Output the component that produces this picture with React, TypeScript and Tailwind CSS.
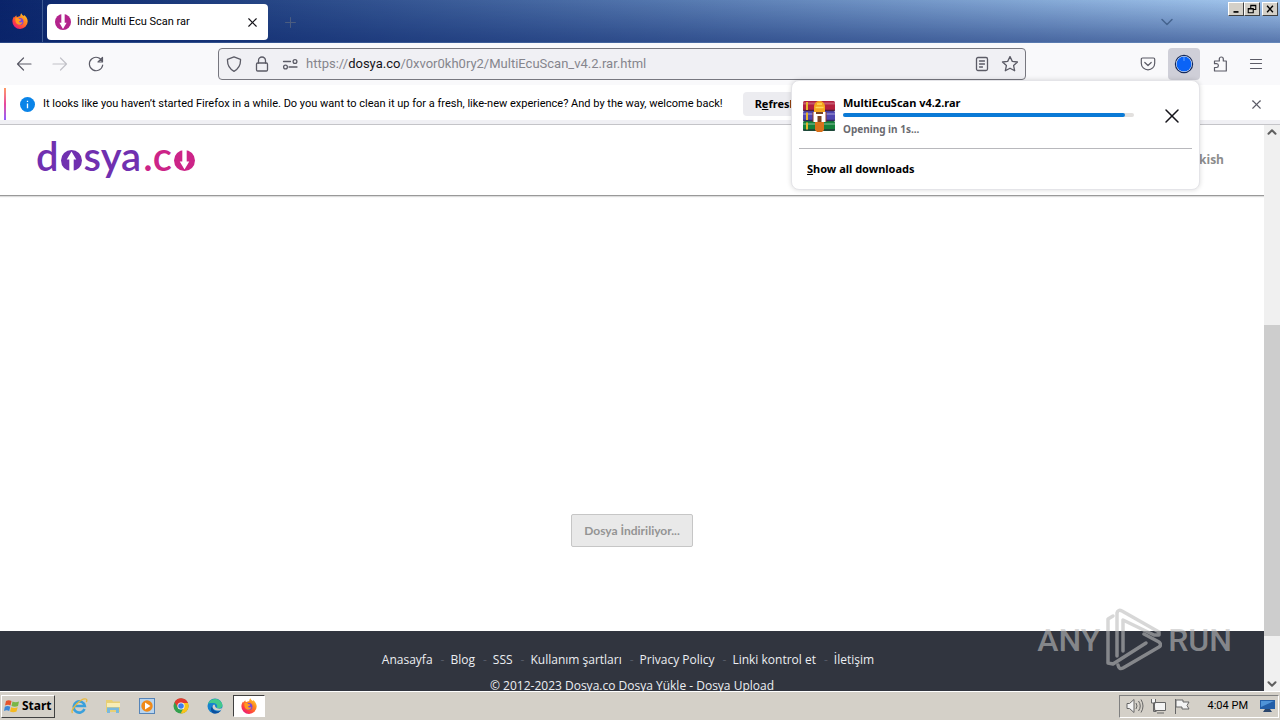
import { ReactNode } from "react";
import { ChevronDown, ChevronUp, Plus, X } from "lucide-react";

const ui = "font-['Noto_Sans','Open_Sans',sans-serif]";

const footerLinks = ["Anasayfa", "Blog", "SSS", "Kullanım şartları", "Privacy Policy", "Linki kontrol et", "İletişim"];

function Firefox({ className }: { className: string }) {
    return (
        <svg viewBox="0 0 16 16" className={className}>
            <defs>
                <linearGradient id="fx" x1="1" y1="0" x2="0.2" y2="1">
                    <stop offset="0" stopColor="#ffe03a" />
                    <stop offset="0.4" stopColor="#ff8a1c" />
                    <stop offset="0.75" stopColor="#ff4040" />
                    <stop offset="1" stopColor="#e31587" />
                </linearGradient>
            </defs>
            <path fill="url(#fx)" d="M9.4 0.2c.4 1.6 1.5 2 2.4 2.8.2-.4.3-.7.3-1 2 1.400 3.600 3.900 3.600 6.600A7.600 7.300 0 0 1 .4 8.500c0-2.200.7-3.900 1.700-5.100l.3 1.200C3 3.700 3.800 3 4.300 2.300c0 .8.2 1.400.7 2C6.500 3 8.200 3.200 8.200 3.200 8.300 1.700 8.700.8 9.400.2z" />
            <circle cx="7.900" cy="8.400" r="3.500" fill="#7543e3" />
            <path fill="#ff9a20" d="M3.400 5.200c1.500-.8 3-.4 4 .8 1 .2 1.700.3 1.900.9-.5 1-1.900.9-2.400 1.500.5 1.300 2.400 1.400 3.500.4-.2 2-1.800 3.100-3.500 2.900C4.300 11.400 3 8.500 3.400 5.200z" />
        </svg>
    );
}

function RoundLogo({ className, down, color }: { className: string; down?: boolean; color: string }) {
    return (
        <svg viewBox="0 0 22 22" className={className}>
            <g transform={down ? "rotate(180 11 11)" : undefined}>
                <circle cx="11" cy="11" r="11" fill={color} />
                <path fill="#fff" d="M11 1.500l5 8.500h-2.700v12H8.700V10H6z" />
            </g>
        </svg>
    );
}

function ToolButton({ label, children, active }: { label: string; children: ReactNode; active?: boolean }) {
    return (
        <button aria-label={label} className={`flex size-8 items-center justify-center rounded ${active ? "bg-[#cfcfd8]" : ""}`}>
            <svg viewBox="0 0 16 16" className="size-4 overflow-visible" fill="none" stroke="#5b5b66" strokeWidth="1.2" strokeLinecap="round" strokeLinejoin="round">
                {children}
            </svg>
        </button>
    );
}

function TitleBar() {
    return (
        <header className="bg-linear-to-r from-[#0a246a] to-[#a6caf0]">
            <div className="flex h-[43px] items-start border-b border-[#3c5c96]/60 bg-linear-to-b from-transparent to-[#0a246a]/50">
                <div className="flex h-full w-[43px] items-center border-r border-[#5470a4]/70 pl-3">
                    <Firefox className="size-4" />
                </div>
                <div className="ml-1 mt-1 flex h-9 w-[221px] items-center rounded bg-white pl-2 pr-2">
                    <RoundLogo className="size-4" down color="#b3238c" />
                    <span className="ml-1.5 flex-1 font-['Roboto',sans-serif] text-[11px] text-black">İndir Multi Ecu Scan rar</span>
                    <button aria-label="Close tab" className="flex size-4 items-center justify-center">
                        <X size={15} strokeWidth={1.800} color="#15141a" className="shrink-0" />
                    </button>
                </div>
                <button aria-label="New tab" className="ml-3.5 mt-3.5">
                    <Plus size={17} strokeWidth={1.4} color="#4c5d80" />
                </button>
                <button aria-label="List all tabs" className="ml-auto mt-3 mr-[51px]">
                    <ChevronDown size={20} strokeWidth={1.8} color="#46648f" />
                </button>
                <div className="mr-0.5 mt-0.5 flex">
                    <WindowButton label="Minimize"><path d="M3 9.500h6" strokeWidth="2" /></WindowButton>
                    <WindowButton label="Restore"><path d="M4.500 5V1.500h6v5H8M1.500 5.500h6v5h-6zM4 2h7M1 6h7" /></WindowButton>
                    <span className="w-0.5" />
                    <WindowButton label="Close"><path d="M2.500 2l7 8M9.500 2l-7 8" strokeWidth="1.700" /></WindowButton>
                </div>
            </div>
        </header>
    );
}

function WindowButton({ label, children }: { label: string; children: ReactNode }) {
    return (
        <button aria-label={label} className="flex h-3.5 w-4 items-center justify-center border border-t-white border-l-white border-r-[#404040] border-b-[#404040] bg-[#d4d0c8]">
            <svg viewBox="0 0 12 12" className="size-2.5" fill="none" stroke="#000" strokeWidth="1.300">{children}</svg>
        </button>
    );
}

function WinRar() {
    return (
        <svg viewBox="0 0 32 32" className="size-8 shrink-0">
            <rect y="1" width="32" height="10" rx="1.500" fill="#b3203e" />
            <rect y="11" width="32" height="10" rx="1.500" fill="#4f46b0" />
            <rect y="21" width="32" height="10" rx="1.500" fill="#15803a" />
            <path d="M0 3.500h32M0 14h32M0 24h32" stroke="#fff" strokeOpacity="0.25" strokeWidth="2" />
            <path d="M0 10.500h32M0 20.500h32M0 30h32" stroke="#251a3a" strokeOpacity="0.7" strokeWidth="1.500" />
            <path d="M4 2v8M4 12.500v7.500M4 22.500v7" stroke="#e7b52d" strokeWidth="2" />
            <path d="M11 12V6q1-5 5.500-5T22 6v6z" fill="#f3a51d" />
            <path d="M12.500 7.500h8M14 4h5" stroke="#ffd75a" strokeWidth="1.500" />
            <path d="M12 21h9v9l-2 2h-5l-2-2z" fill="#d9711b" />
            <path d="M10 12h13v10H10z" fill="#fff" />
            <path d="M13 12h7v2h-7zM14.500 16h4v6h-4z" fill="#7a4324" />
            <path d="M10 12v10M23 12v10" stroke="#8a3a2a" />
        </svg>
    );
}

function DownloadsPanel() {
    return (
        <section aria-label="Downloads" className="absolute right-0 top-8 z-20 w-[409px] rounded-lg border border-[#e4e4e8] bg-white px-[7px] text-black shadow-[0_0_5px_rgba(0,0,0,0.15)]">
            <div className="flex h-[67px] items-center pl-1 pr-2 pt-0.5">
                <WinRar />
                <div className="ml-2 w-[291px]">
                    <p className="text-[11px] leading-4 font-bold">MultiEcuScan v4.2.rar</p>
                    <div className="mb-1 mt-0.5 h-1 rounded-full bg-[#e2e0de]">
                        <div className="h-1 w-[97%] rounded-full bg-[#0a7ad6]" />
                    </div>
                    <p className="text-[10px] leading-4 font-bold text-[#6a6a70]">Opening in 1s...</p>
                </div>
                <button aria-label="Cancel download" className="ml-auto">
                    <X size={24} strokeWidth={1.500} color="#15141a" />
                </button>
            </div>
            <div className="border-t border-[#b8b8bc] pb-2 pl-2 pt-1.5">
                <a href="#downloads" className="text-[11px] leading-6 font-bold"><u>S</u>how all downloads</a>
            </div>
        </section>
    );
}

function Toolbar() {
    return (
        <nav className="flex h-[42px] items-center bg-[#f9f9fb] px-2">
            <div className="flex gap-1">
                <ToolButton label="Back"><path d="M15 8H1.500M7.500 2L1.500 8l6 6" /></ToolButton>
                <ToolButton label="Forward"><path stroke="#c2c2c8" d="M1 8h13.500M8.500 2l6 6-6 6" /></ToolButton>
                <ToolButton label="Reload"><path d="M14.300 5.500A6.700 6.700 0 1 0 14.700 9M14.500 1.500v4.500H10z" /></ToolButton>
            </div>
            <div className="mx-[106px] flex h-8 flex-1 items-center rounded border border-[#77777f] bg-[#f0f0f4] px-[7px] text-[#5b5b66]">
                <svg viewBox="0 0 72 16" className="h-4 w-[72px] shrink-0" fill="none" stroke="#5b5b66" strokeWidth="1.300" strokeLinecap="round" strokeLinejoin="round">
                    <path d="M8 .8l6.500 2.500c.3 5.500-1.700 9.500-6.500 12-4.800-2.500-6.800-6.500-6.500-12z" />
                    <rect x="30.500" y="7" width="11" height="8" rx="1.200" />
                    <path d="M32.500 7V4.500a3.500 3.500 0 0 1 7 0V7M57.500 5.500h7M63 11h8" />
                    <circle cx="69" cy="5.500" r="1.900" />
                    <circle cx="59.500" cy="11" r="1.900" />
                </svg>
                <div className="relative ml-2 flex-1 font-['Roboto',sans-serif] text-[13px]">
                    <input aria-label="Address" className="absolute inset-0 w-full bg-transparent outline-none" />
                    <span className="text-[#85858d]">https://<span className="text-[#15141a]">dosya.co</span>/0xvor0kh0ry2/MultiEcuScan_v4.2.rar.html</span>
                </div>
                <svg viewBox="0 0 44 16" className="h-4 w-11 shrink-0" fill="none" stroke="#5b5b66" strokeWidth="1.300" strokeLinecap="round" strokeLinejoin="round">
                    <rect x="2.500" y="1.500" width="11" height="13" rx="1.500" />
                    <path d="M5.500 5h5M5.500 8h5M5.500 11h3M36 .5l2.300 4.900 5.200.6-3.900 3.600 1.100 5.200L36 12.200l-4.700 2.600 1.100-5.200L28.500 6l5.200-.6z" />
                </svg>
            </div>
            <div className="flex gap-1">
                <ToolButton label="Save to Pocket"><path d="M2.500 2h11c.8 0 1.200.5 1.200 1.200v4a6.700 6.700 0 0 1-13.400 0v-4C1.300 2.500 1.700 2 2.500 2zM4.800 6.500L8 9.500l3.200-3" /></ToolButton>
                <div className="relative">
                    <ToolButton label="Downloads" active>
                        <circle cx="8" cy="8" r="8.600" fill="#fff" stroke="#15295a" />
                        <circle cx="8" cy="8" r="7.500" fill="#0a63f6" stroke="none" />
                        <path d="M8 1.500v3" stroke="#5b9bff" />
                    </ToolButton>
                    <DownloadsPanel />
                </div>
                <ToolButton label="Extensions"><path d="M2.500 15V11.500h2a1.900 1.900 0 0 0 0-3.800h-2V5h4.800V3a2 2 0 0 1 4 0v2h3v10z" /></ToolButton>
                <ToolButton label="Menu"><path d="M2.500 3.500h11M2.500 7.500h11M2.500 12.500h11" /></ToolButton>
            </div>
        </nav>
    );
}

function Notice() {
    return (
        <div className="border-b border-[#c4c4c8] bg-[#f0f0f4] pb-1">
            <div className="flex h-[35px] items-center bg-white pl-1 pr-4 pt-[3px] text-[11px] text-black">
                <span className="h-8 w-0.5 bg-linear-to-b from-[#ff9a62] via-[#e8459b] to-[#9059ff]" />
                <svg viewBox="0 0 16 16" className="ml-3.5 size-[15px]">
                    <circle cx="8" cy="8" r="8" fill="#0a84e8" />
                    <path d="M8 7v5M8 4v1.300" stroke="#fff" strokeWidth="1.400" />
                </svg>
                <p className="ml-2 font-['Roboto',sans-serif] whitespace-nowrap">It looks like you haven’t started Firefox in a while. Do you want to clean it up for a fresh, like-new experience? And by the way, welcome back!</p>
                <button className="ml-5 h-6 rounded bg-[#ececf0] px-3 font-bold whitespace-nowrap">R<u>e</u>fresh Firefox…</button>
                <button aria-label="Close message" className="ml-auto">
                    <X size={15} strokeWidth={1.800} color="#5b5b66" />
                </button>
            </div>
        </div>
    );
}

function Logo() {
    return (
        <a href="#home" aria-label="dosya.co" className="flex items-center pb-2 font-['Lato',sans-serif] text-[40px] leading-10 font-semibold">
            <span className="text-[#7030b0]">d</span>
            <RoundLogo className="ml-0.5 mt-2 size-[21px]" color="#7030b0" />
            <span className="ml-0.5 text-[#7030b0]">sya</span>
            <span className="ml-0.5 text-[#cc2488]">.c</span>
            <RoundLogo className="ml-0.5 mt-2 size-[21px]" down color="#cc2488" />
        </a>
    );
}

function Page() {
    return (
        <div className="flex min-w-0 flex-1 flex-col overflow-hidden bg-white font-['Open_Sans','Noto_Sans',sans-serif]">
            <header className="flex h-[71px] shrink-0 items-center justify-between border-b border-[#999] pl-9 pr-10 shadow-[0_1px_1px_#ddd]">
                <Logo />
                <a href="#tr" className="text-[12px] font-bold text-[#8c8c8c]">Turkish</a>
            </header>
            <main className="flex flex-1 items-end justify-center pb-[84px]">
                <button className="h-[33px] rounded-xs border border-[#c6c6c6] bg-[#e9e9e9] px-3 font-['Lato',sans-serif] text-[12px] font-bold text-[#949494]">Dosya İndiriliyor...</button>
            </main>
            <footer className="h-[60px] shrink-0 bg-[#31353f] pt-[19px] text-[12px] leading-5 text-[#eceef2]">
                <ul className="flex justify-center pr-2">
                    {footerLinks.map((link, i) => (
                        <li key={link} className="flex">
                            {i > 0 && <span className="ml-2 mr-1.5 text-[#555a66]">-</span>}
                            <a href="#footer">{link}</a>
                        </li>
                    ))}
                </ul>
                <p className="mt-1.5 text-center">© 2012-2023 Dosya.co Dosya Yükle - Dosya Upload</p>
            </footer>
        </div>
    );
}

function Scrollbar() {
    return (
        <div className="flex w-4 shrink-0 flex-col items-center bg-[#f0f0f0]">
            <ChevronUp size={14} strokeWidth={3.500} color="#606060" />
            <div className="grow-[186]" />
            <div className="w-full grow-[311] bg-[#cdcdcd]" />
            <div className="grow-[41]" />
            <ChevronDown size={14} strokeWidth={3.500} color="#606060" />
        </div>
    );
}

function Watermark() {
    return (
        <div className="absolute bottom-[19px] right-[48px] flex items-center font-['Liberation_Sans_Narrow','Roboto',sans-serif] text-[32px] leading-none font-medium text-[#bebebe]/60">
            <span>ANY</span>
            <svg viewBox="0 0 56 64" className="mx-1.5 h-16 w-14 opacity-60" fill="none" stroke="#bebebe" strokeWidth="3.500" strokeLinejoin="round" strokeLinecap="round">
                <path d="M7 8L2 11v44l5 1 33-21" />
                <path d="M11 48V5q1-4 5-2l37 21v3h-5L17 12v31" />
                <path d="M12 57q1 5 5 3l36-21q3-2 0-5L38 26" />
            </svg>
            <span>RUN</span>
        </div>
    );
}

function Taskbar() {
    return (
        <footer className="flex h-[29px] shrink-0 items-center border-t border-white bg-[#d4d0c8] px-px text-black">
            <button className="flex h-[23px] items-center gap-0.5 border border-t-white border-l-white border-r-[#404040] border-b-[#404040] px-0.5 text-[12px] font-bold">
                <svg viewBox="0 0 16 16" className="size-4">
                    <path d="M2 3c2-1.200 3.500-1 5.500 0L6.500 7.500C5 6.500 3 6.500 1 7.500z" fill="#e5532d" />
                    <path d="M8.500 3.500c2 1 4 1 6.500 0l-1 4.500c-2 1-4.500 1-6.500 0z" fill="#7ab648" />
                    <path d="M.8 8.800c2-1 3.700-1 5.500 0L5.200 13c-1.700-1-3.500-.9-5.200 0z" fill="#3c86d8" />
                    <path d="M7.200 9.200c2 1 4.300 1 6.500 0l-1.200 4.300c-2 1-4.500 1-6.500 0z" fill="#f5b921" />
                </svg>
                Start
            </button>
            <div className="ml-4 flex items-center gap-[18px]">
                <svg viewBox="0 0 16 16" className="size-4 overflow-visible" fill="none">
                    <path d="M13.500 11A5.600 5.600 0 1 1 13.800 8H4" stroke="#3aa0dc" strokeWidth="2.600" />
                    <path d="M1.500 15C-1 12 10-.5 15 1c1.500.7.700 2.300.2 3" stroke="#e9b93a" strokeWidth="1.300" />
                </svg>
                <svg viewBox="0 0 16 16" className="size-4">
                    <path d="M1 2h6l1 1.500h7V14H1z" fill="#e8cf74" />
                    <path d="M2 5h13v4H2z" fill="#f8edb5" />
                    <path d="M2 15V9.500h12V15h-3v-3H5v3z" fill="#79b9de" />
                </svg>
                <svg viewBox="0 0 16 16" className="size-4">
                    <rect x=".5" y=".5" width="15" height="15" fill="#b9d5ef" stroke="#5584b8" />
                    <circle cx="8" cy="8" r="5.700" fill="#f08a18" />
                    <path d="M6 4.500v7L11.500 8z" fill="#fff" />
                </svg>
                <svg viewBox="0 0 16 16" className="size-4">
                    <circle cx="8" cy="8" r="7.500" fill="#34a04e" />
                    <path d="M1.500 4.200A7.500 7.500 0 0 1 15 5H8L5 9.500z" fill="#e23c31" />
                    <path d="M15 5a7.500 7.500 0 0 1-7.300 10.500L11.500 8 8 5z" fill="#fbc31a" />
                    <circle cx="8" cy="8" r="3.600" fill="#fff" />
                    <circle cx="8" cy="8" r="2.800" fill="#3b7ded" />
                </svg>
                <svg viewBox="0 0 16 16" className="size-4">
                    <circle cx="8" cy="8" r="7.500" fill="#1683ce" />
                    <path d="M1 6C3-.5 13.500-1 15.500 7c0 3-3 4-6 3 1.500-2 .5-4.500-2.500-5C4 4.700 2 5 1 6z" fill="#42c98c" />
                    <path d="M5.500 9c0 4 4.500 5.500 8.500 3.500A7.500 7.500 0 0 1 6 15.200C3 13 3 9 7 7z" fill="#0c4f9e" />
                    <path d="M9.500 10c-2-1-1-3-2.500-3.500-1 .5-1.500 1.500-1.500 2.500.5 3 4 4.500 9 3l1-2c-2 1-4 1-6 0z" fill="#d4d0c8" />
                </svg>
            </div>
            <button aria-label="Firefox" className="ml-2.5 flex h-[22px] w-8 items-center justify-center border border-t-[#404040] border-l-[#404040] border-r-white border-b-white bg-white">
                <Firefox className="size-4" />
            </button>
            <div className="ml-auto flex h-[23px] items-center border border-t-[#808080] border-l-[#808080] border-r-white border-b-white pl-1.5 pr-0.5">
                <svg viewBox="0 0 66 16" className="h-4 w-[66px]" fill="#f4f4f4" stroke="#666" strokeWidth="1">
                    <path d="M1 5.500h2.500L8 1.500v13l-4.500-4H1z" />
                    <path d="M10 5q2 3 0 6M12.500 3q3.500 5 0 10M15 1.500q4 6.500 0 13" fill="none" />
                    <path d="M28.500 4.500h11v8h-11zM31 15h7M25.500 1v4h4V1M27.500 5v8.500h3" />
                    <path d="M49.500 1v15M50 2h7v2h6l-2 3.500 2 3.500h-7V9h-6z" />
                </svg>
                <time className="ml-4 font-['Roboto',sans-serif] text-[11px]">4:04 PM</time>
                <svg viewBox="0 0 16 14" className="ml-3 h-3.5 w-4">
                    <path d="M0 1h15v9H0z" fill="#235ea8" />
                    <path d="M1 2h13L1 8z" fill="#4f93d8" />
                    <path d="M5 10h5l2 3H3z" fill="#29456c" />
                </svg>
            </div>
        </footer>
    );
}

export default function App() {
    return (
        <div className={`flex h-screen flex-col overflow-hidden ${ui}`}>
            <TitleBar />
            <Toolbar />
            <Notice />
            <div className="relative flex min-h-0 flex-1">
                <Page />
                <Scrollbar />
                <Watermark />
            </div>
            <Taskbar />
        </div>
    );
}
